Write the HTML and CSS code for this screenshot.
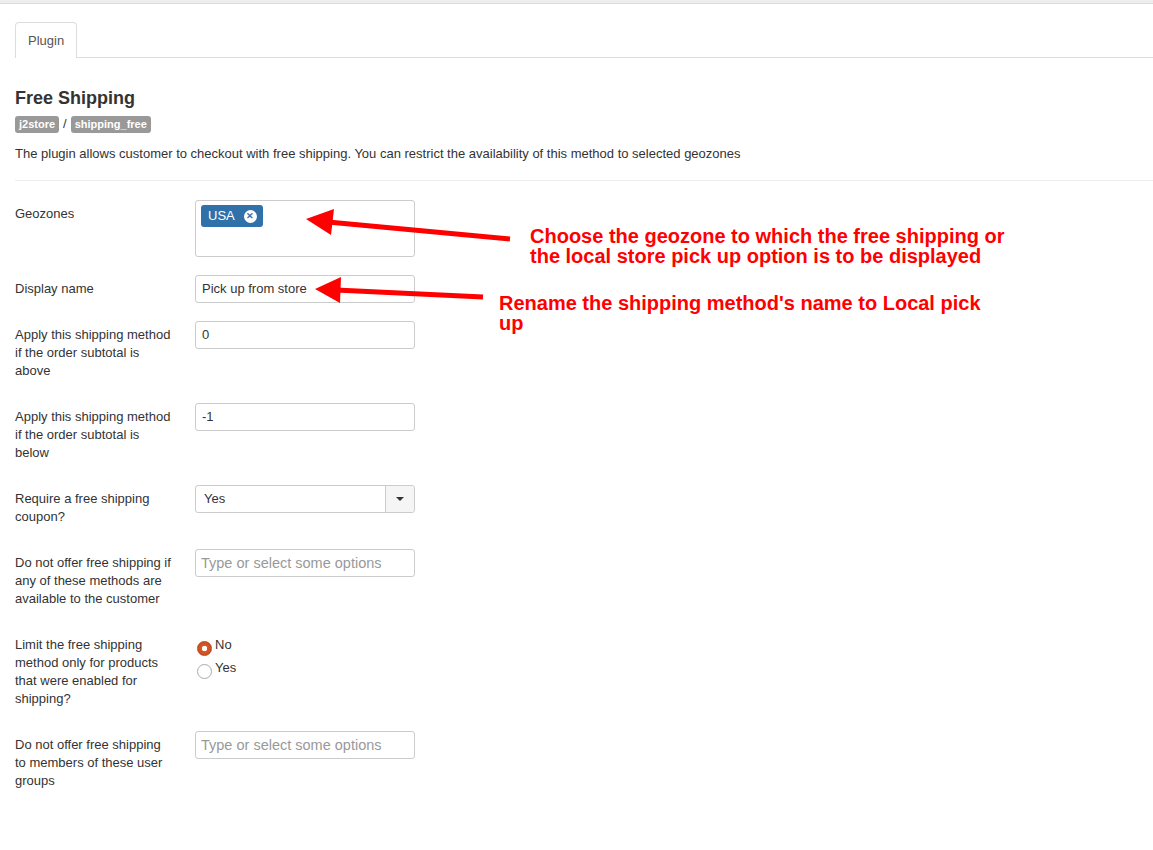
FILE: index.html
```html
<!DOCTYPE html>
<html>
<head>
<meta charset="utf-8">
<link rel="stylesheet" href="styles.css">
</head>
<body>
<div class="topbar"></div>
<div class="page">
  <div class="tabs">
    <div class="tab">Plugin</div>
  </div>
  <h3 class="title">Free Shipping</h3>
  <div class="crumbs"><span class="badge">j2store</span><span class="sep">/</span><span class="badge">shipping_free</span></div>
  <p class="desc">The plugin allows customer to checkout with free shipping. You can restrict the availability of this method to selected geozones</p>
  <div class="rule"></div>

  <div class="form">
    <div class="row">
      <div class="label">Geozones</div>
      <div class="control"><div class="multi"><span class="pill">USA<span class="pill-x">&#x2715;</span></span></div></div>
    </div>
    <div class="row">
      <div class="label">Display name</div>
      <div class="control"><div class="input">Pick up from store</div></div>
    </div>
    <div class="row">
      <div class="label">Apply this shipping method if the order subtotal is above</div>
      <div class="control"><div class="input">0</div></div>
    </div>
    <div class="row">
      <div class="label">Apply this shipping method if the order subtotal is below</div>
      <div class="control"><div class="input">-1</div></div>
    </div>
    <div class="row">
      <div class="label">Require a free shipping coupon?</div>
      <div class="control"><div class="select"><span class="select-val">Yes</span><span class="select-btn"><span class="caret"></span></span></div></div>
    </div>
    <div class="row">
      <div class="label">Do not offer free shipping if any of these methods are available to the customer</div>
      <div class="control"><div class="input placeholder">Type or select some options</div></div>
    </div>
    <div class="row">
      <div class="label">Limit the free shipping method only for products that were enabled for shipping?</div>
      <div class="control radios">
        <div class="radio"><span class="dot checked"></span><span>No</span></div>
        <div class="radio"><span class="dot"></span><span>Yes</span></div>
      </div>
    </div>
    <div class="row">
      <div class="label">Do not offer free shipping to members of these user groups</div>
      <div class="control"><div class="input placeholder">Type or select some options</div></div>
    </div>
  </div>
</div>

<svg class="arrows" width="1153" height="850" viewBox="0 0 1153 850">
  <line x1="328" y1="222" x2="510" y2="239" stroke="#ff0000" stroke-width="5"/>
  <polygon points="306,219 334,209 331,235" fill="#ff0000"/>
  <line x1="336" y1="290" x2="483" y2="297" stroke="#ff0000" stroke-width="5"/>
  <polygon points="315,289 341,277 340,303" fill="#ff0000"/>
</svg>
<div class="note note1">Choose the geozone to which the free shipping or<br>the local store pick up option is to be displayed</div>
<div class="note note2">Rename the shipping method's name to Local pick<br>up</div>
</body>
</html>
```
FILE: styles.css
```css
html, body { margin: 0; padding: 0; background: #fff; }
body {
  font-family: "Liberation Sans", Arial, sans-serif;
  font-size: 13px;
  color: #333;
  line-height: 18px;
  position: relative;
  width: 1153px;
  height: 850px;
  overflow: hidden;
}
.topbar {
  height: 3px;
  background: #eee;
  border-bottom: 1px solid #ddd;
}
.page { padding-left: 15px; }
.tabs {
  margin-top: 18px;
  border-bottom: 1px solid #ddd;
  display: flex;
}
.tab {
  border: 1px solid #ddd;
  border-bottom: none;
  border-radius: 4px 4px 0 0;
  padding: 9px 12px 8px 12px;
  color: #555;
  background: #fff;
  margin-bottom: -1px;
  height: 18px;
}
.title {
  margin: 30px 0 0 0;
  font-size: 18px;
  line-height: 20px;
  font-weight: bold;
  color: #333;
}
.crumbs {
  margin-top: 7px;
  display: flex;
  align-items: center;
  height: 18px;
}
.badge {
  background: #999;
  color: #fff;
  font-weight: bold;
  font-size: 11px;
  line-height: 17px;
  padding: 0 4px;
  border-radius: 3px;
}
.sep { margin: 0 4px; color: #333; }
.desc { margin: 12px 0 0 0; }
.rule {
  margin-top: 17px;
  border-top: 1px solid #eee;
}
.form { padding-top: 19px; }
.row {
  display: flex;
  margin-bottom: 18px;
}
.label {
  width: 160px;
  padding: 5px 20px 5px 0;
}
.control { width: 220px; }
.multi {
  box-sizing: border-box;
  height: 57px;
  border: 1px solid #ccc;
  border-radius: 3px;
  padding: 4px 5px;
}
.pill {
  display: inline-flex;
  align-items: center;
  background: #3071a9;
  color: #fff;
  border-radius: 3px;
  height: 22px;
  padding: 0 6px 0 7px;
  font-size: 13px;
}
.pill-x {
  display: inline-flex;
  align-items: center;
  justify-content: center;
  width: 13px;
  height: 13px;
  border-radius: 50%;
  background: #fff;
  color: #3071a9;
  font-size: 9px;
  font-weight: bold;
  margin-left: 9px;
  line-height: 1;
}
.input {
  box-sizing: border-box;
  height: 28px;
  border: 1px solid #ccc;
  border-radius: 3px;
  padding: 4px 6px;
  line-height: 18px;
  color: #333;
  white-space: nowrap;
}
.input.placeholder { color: #999; font-size: 14.5px; padding-left: 5px; }
.select {
  box-sizing: border-box;
  height: 28px;
  border: 1px solid #ccc;
  border-radius: 3px;
  display: flex;
  background: #fff;
}
.select-val { flex: 1; padding: 4px 8px; }
.select-btn {
  width: 28px;
  border-left: 1px solid #ccc;
  background: #f5f5f5;
  border-radius: 0 3px 3px 0;
  display: flex;
  align-items: center;
  justify-content: center;
}
.caret {
  width: 0; height: 0;
  border-left: 4px solid transparent;
  border-right: 4px solid transparent;
  border-top: 4px solid #333;
}
.radios { padding-top: 5px; }
.radio {
  display: flex;
  align-items: flex-start;
  height: 23px;
}
.dot {
  box-sizing: border-box;
  width: 15px;
  height: 15px;
  border-radius: 50%;
  border: 1px solid #aaa;
  background: #fff;
  margin: 5px 3px 0 2px;
}
.dot.checked {
  border: 1px solid #b54a1f;
  background: radial-gradient(circle, #fff 0 2.5px, #d9592a 3px, #c94d1f 7px);
}
.arrows { position: absolute; left: 0; top: 0; pointer-events: none; }
.note {
  position: absolute;
  color: #ff0000;
  font-family: "Liberation Sans Narrow", "Liberation Sans", Arial, sans-serif;
  font-weight: bold;
  font-size: 20px;
  line-height: 20px;
  white-space: nowrap;
}
.note1 { left: 530px; top: 226px; }
.note2 { left: 499px; top: 293px; }
```
